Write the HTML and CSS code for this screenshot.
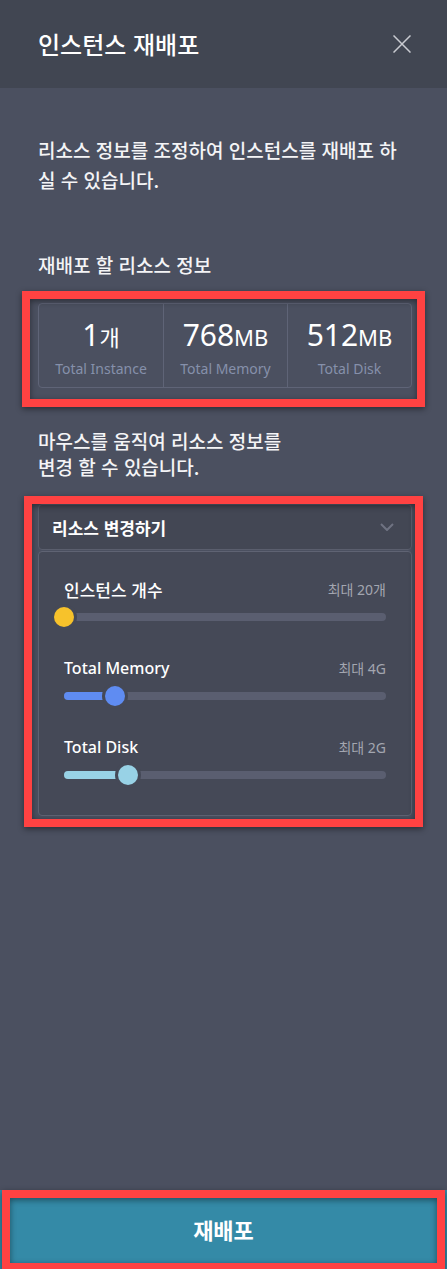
FILE: index.html
```html
<!DOCTYPE html>
<html lang="ko">
<head>
<meta charset="utf-8">
<title>인스턴스 재배포</title>
<link rel="stylesheet" href="styles.css">
</head>
<body>
<div class="modal">
  <header class="modal-header">
    <h1 class="modal-title">인스턴스 재배포</h1>
    <button class="close-btn" aria-label="닫기">
      <svg width="18" height="18" viewBox="0 0 18 18"><path d="M0.5 0.5 L17.5 17.5 M17.5 0.5 L0.5 17.5" stroke="#c9cbd1" stroke-width="1.5" fill="none"/></svg>
    </button>
  </header>

  <main class="modal-body">
    <p class="intro">리소스 정보를 조정하여 인스턴스를 재배포 하실 수 있습니다.</p>

    <h2 class="section-title">재배포 할 리소스 정보</h2>

    <div class="highlight hl-summary">
      <div class="summary">
        <div class="summary-item">
          <div class="summary-value">1<span class="unit">개</span></div>
          <div class="summary-label">Total Instance</div>
        </div>
        <div class="summary-item">
          <div class="summary-value">768<span class="unit">MB</span></div>
          <div class="summary-label">Total Memory</div>
        </div>
        <div class="summary-item">
          <div class="summary-value">512<span class="unit">MB</span></div>
          <div class="summary-label">Total Disk</div>
        </div>
      </div>
    </div>

    <p class="hint">마우스를 움직여 리소스 정보를<br>변경 할 수 있습니다.</p>

    <div class="highlight hl-resource">
      <div class="dropdown">
        <div class="dropdown-head">
          <span class="dropdown-title">리소스 변경하기</span>
          <svg class="chevron" width="14" height="8" viewBox="0 0 14 8"><path d="M1 1 L7 7 L13 1" stroke="#6f7382" stroke-width="2" fill="none"/></svg>
        </div>
        <div class="dropdown-panel">
          <div class="slider-row">
            <div class="slider-top">
              <span class="slider-label slider-label-ko">인스턴스 개수</span>
              <span class="slider-max">최대 20개</span>
            </div>
            <div class="slider">
              <div class="track"></div>
              <div class="fill fill-yellow" style="width:0px"></div>
              <div class="thumb thumb-yellow" style="left:0px"></div>
            </div>
          </div>
          <div class="slider-row">
            <div class="slider-top">
              <span class="slider-label">Total Memory</span>
              <span class="slider-max">최대 4G</span>
            </div>
            <div class="slider">
              <div class="track"></div>
              <div class="fill fill-blue" style="width:51px"></div>
              <div class="thumb thumb-blue" style="left:51px"></div>
            </div>
          </div>
          <div class="slider-row">
            <div class="slider-top">
              <span class="slider-label">Total Disk</span>
              <span class="slider-max">최대 2G</span>
            </div>
            <div class="slider">
              <div class="track"></div>
              <div class="fill fill-sky" style="width:64px"></div>
              <div class="thumb thumb-sky" style="left:64px"></div>
            </div>
          </div>
        </div>
      </div>
    </div>
  </main>

  <div class="highlight hl-button">
    <button class="submit-btn">재배포</button>
  </div>
</div>
</body>
</html>
```

FILE: styles.css
```css
* { box-sizing: border-box; }

html, body {
  margin: 0;
  padding: 0;
}

body {
  font-family: "Noto Sans", "Noto Sans CJK KR", sans-serif;
  background: #4b5060;
  color: #ffffff;
}

.modal {
  width: 447px;
  height: 1269px;
  display: flex;
  flex-direction: column;
  background: #4b5060;
  overflow: hidden;
}

.modal-header {
  height: 88px;
  flex: 0 0 88px;
  background: #414652;
  display: flex;
  align-items: center;
  justify-content: space-between;
  padding: 0 36px 0 38px;
}

.modal-title {
  margin: 0;
  font-size: 24px;
  font-weight: 500;
  line-height: 30px;
  color: #ffffff;
  font-family: "Noto Sans CJK KR", sans-serif;
}

.close-btn {
  background: none;
  border: 0;
  padding: 0;
  width: 18px;
  height: 18px;
  display: flex;
}

.modal-body {
  flex: 1;
  padding: 47px 35px 0 38px;
  display: flex;
  flex-direction: column;
}

.intro {
  margin: 0;
  font-size: 19px;
  line-height: 30px;
  font-weight: 500;
  color: #f4f4f6;
  font-family: "Noto Sans CJK KR", sans-serif;
}

.section-title {
  margin: 57px 0 0;
  font-size: 19px;
  line-height: 26px;
  font-weight: 500;
  color: #f4f4f6;
  font-family: "Noto Sans CJK KR", sans-serif;
}

/* annotation highlight overlays */
.highlight {
  position: relative;
}
.highlight::after {
  content: "";
  position: absolute;
  border: 8px solid #ff4242;
  box-shadow: 0 2px 6px rgba(0, 0, 0, 0.45), inset 0 2px 6px rgba(0, 0, 0, 0.45);
  pointer-events: none;
}
.hl-summary { margin-top: 25px; }
.hl-summary::after { left: -16px; right: -13px; top: -12px; bottom: -19px; }
.hl-resource { margin-top: 24px; }
.hl-resource::after { left: -14px; right: -11px; top: -8px; bottom: -11px; }
.hl-button { flex: 0 0 79px; }
.hl-button::after { left: 2px; right: 2px; top: 0; bottom: -2px; }

.summary {
  display: grid;
  grid-template-columns: 1fr 1fr 1fr;
  border: 1px solid #5f6477;
  border-radius: 4px;
  height: 85px;
}

.summary-item {
  text-align: center;
  padding-top: 13px;
}
.summary-item + .summary-item {
  border-left: 1px solid #5f6477;
}

.summary-value {
  font-size: 30px;
  line-height: 36px;
  color: #ffffff;
  font-weight: 400;
}
.unit {
  font-size: 22px;
}

.summary-label {
  margin-top: 4px;
  font-size: 14px;
  line-height: 20px;
  color: #8690ab;
}

.hint {
  margin: 40px 0 0;
  font-size: 19px;
  line-height: 26px;
  font-weight: 500;
  color: #f4f4f6;
  font-family: "Noto Sans CJK KR", sans-serif;
}

.dropdown {
  display: flex;
  flex-direction: column;
  gap: 1px;
}

.dropdown-head {
  height: 46px;
  background: #434754;
  border: 1px solid #5a5e6d;
  border-radius: 4px;
  display: flex;
  align-items: center;
  justify-content: space-between;
  padding: 0 17px 0 13px;
}

.dropdown-title {
  font-size: 17px;
  font-weight: 700;
  color: #ffffff;
  font-family: "Noto Sans CJK KR", sans-serif;
}

.chevron { display: block; }

.dropdown-panel {
  background: #454957;
  border: 1px solid #5f6373;
  border-radius: 4px;
  padding: 25px 25px 30px;
  display: flex;
  flex-direction: column;
  gap: 29px;
}

.slider-row {
  display: flex;
  flex-direction: column;
  gap: 6px;
}

.slider-top {
  height: 24px;
  display: flex;
  align-items: center;
  justify-content: space-between;
}

.slider-label {
  font-size: 16px;
  font-weight: 500;
  color: #ffffff;
}
.slider-label-ko {
  font-size: 17px;
  font-family: "Noto Sans CJK KR", sans-serif;
}

.slider-max {
  font-size: 14px;
  color: #a3a6b0;
}

.slider {
  position: relative;
  height: 20px;
}

.track {
  position: absolute;
  left: 0;
  right: 0;
  top: 6px;
  height: 8px;
  border-radius: 4px;
  background: #5a5e70;
}

.fill {
  position: absolute;
  left: 0;
  top: 6px;
  height: 8px;
  border-radius: 4px;
}
.fill-blue { background: #5f8cf2; }
.fill-sky { background: #98d2e6; }
.fill-yellow { background: #f7c22b; }

.thumb {
  position: absolute;
  top: 0;
  width: 20px;
  height: 20px;
  margin-left: -10px;
  border-radius: 50%;
  box-shadow: 0 0 0 3px #454957;
}
.thumb-yellow { background: #f7c22b; }
.thumb-blue { background: #5f8cf2; }
.thumb-sky { background: #98d2e6; }

.submit-btn {
  width: 100%;
  height: 100%;
  border: 0;
  background: #348aa7;
  color: #ffffff;
  font-family: "Noto Sans CJK KR", sans-serif;
  font-size: 22px;
  font-weight: 700;
  padding: 0 0 2px;
}
```
